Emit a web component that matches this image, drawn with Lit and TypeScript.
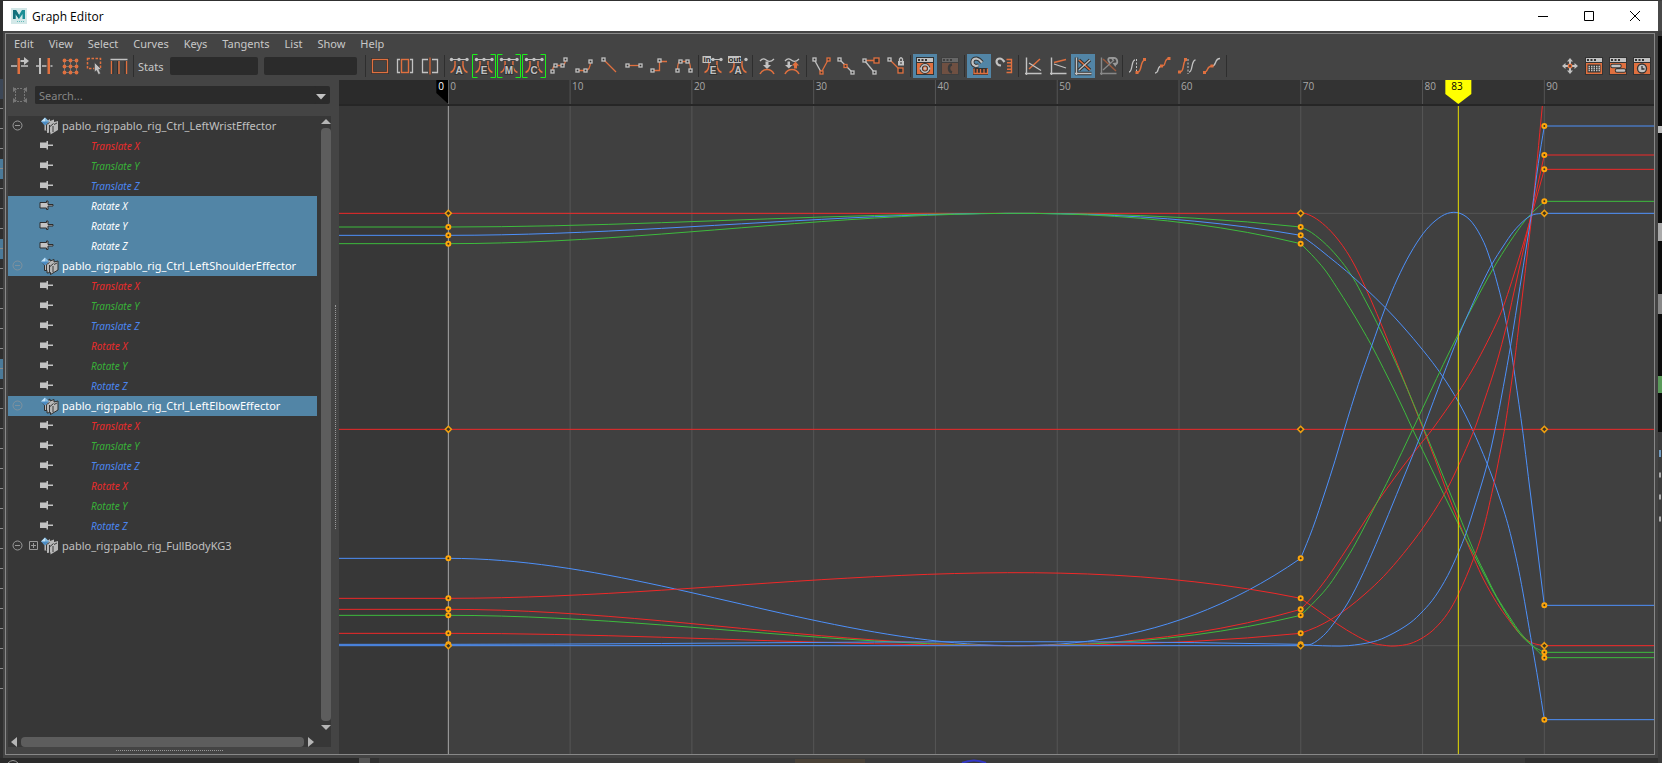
import { LitElement, html, svg, css, TemplateResult } from "lit";
import { customElement, state } from "lit/decorators.js";
import { classMap } from "lit/directives/class-map.js";

const OR = "#e0703f";
const GR = "#c2c2c2";
const RED = "#f02828";
const GREEN = "#3dbb3d";
const BLUE = "#4d90fa";

/* ---------- toolbar glyphs, 24 x 24 ---------- */

const knot = (x: number, y: number, c = GR, s = 2) =>
  svg`<rect x=${x - s + 0.5} y=${y - s + 0.5} width=${s * 2 - 1} height=${s * 2 - 1} fill="#333" stroke=${c} stroke-width="1.3"/>`;
const ln = (d: string, c = OR, w = 1.3) =>
  svg`<path d=${d} fill="none" stroke=${c} stroke-width=${w}/>`;
const fill = (d: string, c = GR) => svg`<path d=${d} fill=${c}/>`;

const bell = (letter: string, mode = "") => svg`
  ${ln("M8 7C8.5 13 8 17 3.5 18.5M16 7C15.5 13 16 17 20.5 18.5", OR, 1.5)}
  ${mode !== "out" ? ln("M4 5.5H20", GR, 1) : ""}
  <circle cx="12" cy="5.5" r="1.7" fill=${GR}/><circle cx="20" cy="5.5" r="1.7" fill=${GR}/>
  ${mode === "in" || mode === "out" ? "" : svg`<circle cx="4.5" cy="5.5" r="1.7" fill=${GR}/>`}
  <text x="12" y="20" class="g" text-anchor="middle">${letter}</text>
  ${mode === "in" ? svg`<rect x="1.5" y="2" width="8.5" height="7" fill=${GR}/><text class="tag" x="2.5" y="8">in</text>` : ""}
  ${mode === "out" ? svg`<rect x="2" y="2" width="13" height="7" fill=${GR}/><text class="tag" x="2.5" y="8">out</text>` : ""}
  ${mode === "box" ? ln("M5.5 .5H.5V23.5H5.5M18.5 .5H23.5V23.5H18.5", "#1bf01b", 1) : ""}`;

const panel = (inner: unknown) => svg`
  <rect x="3" y="3" width="18" height="18" fill="#333"/>
  <rect x="4" y="4" width="16" height="4" fill=${GR}/><rect x="4" y="9" width="16" height="11" fill=${OR}/>
  <path d="M5 5H7V7H5zM8.5 5H10.5V7H8.5zM12 5H14V7H12z" fill="#333"/>${inner}`;

const axes = (a: string, b: string, ac = OR, c = GR) => svg`
  ${ln("M5.5 3.5V21M4 19.5H20.5", c, 1.4)}${ln(a, ac, 1.5)}${ln(b, c, 1.3)}`;

const G: Record<string, TemplateResult> = {
  move: svg`${fill("M10.5 4H13V20H10.5z", OR)}${ln("M4 12H10M14 12H21", GR)}${fill("M13.5 6H17V3L22 7L17 11V8H13.5z")}`,
  insert: svg`${fill("M7 4H9V20H7z")}${fill("M15.5 4H18V20H15.5z", OR)}${ln("M4 12H7M10 12H14.5M18.5 12H20.5", GR)}`,
  lattice: svg`<path d="M7.5 6.5H19.5V18.5H7.5zM7.5 12.5H19.5M13.5 6.5V18.5" fill="none" stroke="#aaa" stroke-dasharray="1 1"/>
    ${[7.5, 13.5, 19.5].map((x) => [6.5, 12.5, 18.5].map((y) => svg`<circle cx=${x} cy=${y} r="1.9" fill=${OR}/>`))}`,
  region: svg`<path d="M5.5 4.5H18.5V14.5H5.5z" fill="none" stroke=${OR} stroke-width="1.5" stroke-dasharray="2.5 1.5"/>
    <path d="M12.5 8.5V18L14.5 16.5L16.5 20.5L18.5 19.5L16.8 15.5H19.5z" fill=${GR} stroke="#444" stroke-width=".6"/>`,
  retime: svg`${ln("M3.5 5.5H20.5", GR, 1.5)}${ln("M4.5 7V20M12 7V20M19.5 7V20", OR, 1.4)}${ln("M6 7V20M10.5 7V20M18 7V20", "#2e2e2e", 1)}`,
  frameAll: svg`<rect x="4.5" y="5.5" width="15" height="13" fill="none" stroke="#333" stroke-width="3"/><rect x="4.5" y="5.5" width="15" height="13" fill="none" stroke=${OR} stroke-width="1.3"/>`,
  framePlay: svg`${ln("M7 5.5H4.5V18.5H7M17 5.5H19.5V18.5H17", GR)}<rect x="8.5" y="5.5" width="7" height="13" fill="none" stroke=${OR} stroke-width="1.4"/>`,
  center: svg`${ln("M10 5.5H4.5V18.5H10M14 5.5H19.5V18.5H14", GR)}${fill("M11 3.5H13V20.5H11z", "#a0583a")}`,
  A: bell("A"), E: bell("E", "box"), M: bell("M", "box"), C: bell("C", "box"),
  spline: svg`${ln("M5.5 17C6 12 7 11.5 8.5 11.5H15.5C17.5 11.5 18 10 18.5 6")}${knot(5.5, 17.5)}${knot(8.5, 11.5)}${knot(15.5, 11.5)}${knot(18.5, 5.5)}`,
  clamped: svg`${ln("M5.5 16.5H13C17 16.5 18.5 13 18.5 7")}${knot(5.5, 16.5)}${knot(13.5, 16.5)}${knot(18.5, 7.5)}`,
  linear: svg`${ln("M6.5 5.5L19 18")}${knot(6.5, 5.5)}`,
  flat: svg`${ln("M5.5 11.5H18.5")}${knot(5.5, 11.5)}${knot(18.5, 11.5)}`,
  step: svg`${ln("M5.5 16.5H12.5V7.5H20")}${knot(5.5, 16.5)}${knot(12.5, 6.5)}`,
  plateau: svg`${ln("M5.5 16.5C5.5 10 6.5 7.5 8.5 7.5H15.5C17.5 7.5 18.5 10 18.5 16.5")}${knot(8.5, 7.5)}${knot(15.5, 7.5)}${knot(5.5, 16.5)}${knot(18.5, 16.5)}`,
  inE: bell("E", "in"), outA: bell("A", "out"),
  buffer: svg`${ln("M5 7C8 3.5 10 5 12 6.5S16 8 19 5", GR)}${fill("M10.5 7.5H13.5V11H16L12 15L8 11H10.5z")}${ln("M5 20C8 14 16 14 19 20", OR, 1.6)}`,
  swap: svg`${ln("M5 7C8 3.5 10 5 12 6.5S16 8 19 5", GR)}${fill("M7.5 7.5H10V11H12.5L8.8 14.5L5 11H7.5z")}${fill("M14 14.5V11.5H11.8L15.5 7.5L19 11.5H17V14.5z", OR)}${ln("M5 20C8 14 16 14 19 20", OR, 1.6)}`,
  breakT: svg`${ln("M5.5 6L12 18", GR)}${ln("M12.5 18L19 6")}${knot(5.5, 5.5)}${knot(19.5, 5.5, OR)}${knot(12.5, 18.5, OR)}`,
  unify: svg`${ln("M5.5 5.5L18.5 18.5", GR)}${knot(5.5, 5.5)}${knot(11.5, 12, OR)}${knot(18.5, 18.5)}`,
  freeLen: svg`${ln("M5.5 6.5H15", OR, 1.6)}${ln("M5.5 6.5L15 18", GR)}${knot(5.5, 6.5)}${knot(17.5, 6.5, OR, 3)}${knot(15.5, 18.5)}`,
  lockLen: svg`${ln("M5.5 5.5L15 15")}${knot(5.5, 5.5)}${knot(16.5, 16.5, OR, 3)}${fill("M14 7H20V11.5H14z")}${ln("M15.5 7V5Q17 2.5 18.5 5V7", GR)}<rect x="16.5" y="8" width="1" height="2" fill="#333"/>`,
  autoLoad: panel(svg`<circle cx="12" cy="14.5" r="3.8" fill="none" stroke="#333" stroke-width="3.2"/><circle cx="12" cy="14.5" r="3.8" fill="none" stroke=${GR} stroke-width="1.5"/><circle cx="12" cy="14.5" r="1.3" fill=${GR}/>${ln("M6.5 14.5H8M16 14.5H17.5", GR, 2)}`),
  manual: svg`<g opacity=".28">${panel(ln("M14 10.5C10 11 10 17.5 14 18.5", "#222", 2.5))}</g>`,
  snapT: svg`${ln("M11.5 11.5L8.5 12C4 10.5 4.5 4.5 9.5 4.5Q12.5 5 15 8.5", "#333", 4)}${ln("M11.5 11.5L8.5 12C4 10.5 4.5 4.5 9.5 4.5Q12.5 5 15 8.5", GR, 2.2)}<rect x="6" y="14" width="15" height="7" fill="#333"/>${ln("M7 14.5V19.5H20.5V14.5M10.2 15V19M13.5 15V19M17 15V19", OR, 1.3)}`,
  snapV: svg`${ln("M9 11.5C3.5 11 3 4.5 8 4.5Q10 4.5 12.5 8", GR, 2.2)}${ln("M14.5 5.5H19.5V18.5H14.5M15 8.7H19M15 12H19M15 15.2H19", OR, 1.4)}`,
  abs: axes("M8 15L19 5", "M8 9L20 16.5"),
  stack: axes("M8 8.5L20 5.5", "M8 10L20 14"),
  norm: svg`${ln("M5.5 3.5V21M4 19.5H20.5M8 6L19 16M8 16L19 6", "#333", 3.5)}${axes("M8 6L19 16", "M8 16L19 6")}`,
  renorm: svg`${axes("M7 5L20 17", "M7 16L18 6", "#9a5a3e", "#888")}${ln("M14 9C10.5 5 13 2.5 16 4.500M17 4C22 3.500 22.500 9.500 19 11", "#999", 1.8)}${fill("M14 3H18.5L17 7zM16.500 9L20.500 8.500L19.500 13z", "#999")}`,
  preCycle: svg`${ln("M4 18C8 18 6 6 10 6", GR)}<path d="M11.500 5V20" stroke=${GR} stroke-dasharray="2 1.5"/>${ln("M13 18C17 18 15 6 20 6", OR, 1.5)}${fill("M10.5 17H13.5V20H10.5zM18 4H21V7H18z", OR)}`,
  preOff: svg`${ln("M5 19C10 19 6 12 12 12", GR)}${ln("M12 12C17 12 13 5 19 4.5")}${fill("M10 10.5H13V13.5H10zM17.5 3H20.5V6H17.5z", OR)}`,
  postCycle: svg`${ln("M5 18C10 18 7 6 11.5 6", OR, 1.5)}<path d="M13 5V20" stroke=${GR} stroke-dasharray="2 1.5"/>${ln("M14 18C18 18 16 6 20.5 6", GR)}${fill("M3 16.5H6V19.5H3zM9 4H12V7H9z", OR)}`,
  postOff: svg`${ln("M4 18.5C9 18 6 12 12 12", OR, 1.4)}${ln("M12 12C17 12 14 4.5 20 4.5", GR)}${fill("M3 17H6V20H3zM10.5 10.5H13.5V13.5H10.5z", OR)}`,
  pan: svg`${fill("M12 4L15 7.5H13V10H11V7.5H9zM12 20L15 16.5H13V14H11V16.5H9zM4 12L7.5 9V11H10V13H7.5V15zM20 12L16.5 9V11H14V13H16.5V15z")}<rect x="10.5" y="10.5" width="3" height="3" fill="#333" stroke=${OR} stroke-width="1.3"/>`,
  dope: panel(svg`<rect x="5.5" y="10.5" width="13" height="8" fill="#333"/><path d="M6.5 12.5H18M6.5 16.5H18M6.5 14.5H18" stroke=${GR} stroke-width="1.3" stroke-dasharray="1.5 1"/>`),
  trax: panel(svg`<path d="M6.5 12H13.5M11 16.5H18" stroke="#333" stroke-width="4.5" stroke-linecap="round"/><path d="M6.5 12H13.5M11 16.5H18" stroke=${GR} stroke-width="2.5" stroke-linecap="round"/>`),
  time: panel(svg`<circle cx="12" cy="14.5" r="4.5" fill=${GR} stroke="#333" stroke-width="1.3"/>${ln("M12 12V15H14.5", "#333")}`),
};

/* ---------- curves ---------- */

type P = [number, number];
interface Curve { c: string; k: number; apex: number; pts: P[] }

const X0 = -2495, X70 = 62, X90 = 793, LEFT = -2823, TOP = 78, W = 3945, H = 1944;
const frameX = (f: number) => X0 + ((X90 - X0) * f) / 90;
const px = (x: number) => `${((x - LEFT) / W) * 100}%`;
const py = (y: number) => `${((y - TOP) / H) * 100}%`;

const CURVES: Curve[] = [
  { c: RED, k: 400, apex: 400, pts: [[78, 401], [110, 417], [145, 446], [175, 480], [200, 515], [225, 558], [255, 620], [290, 700], [330, 797], [370, 896], [400, 972], [430, 1048], [465, 1138], [500, 1234], [533, 1317], [552, 1365], [583, 1438], [610, 1497], [650, 1568], [685, 1618], [720, 1662], [755, 1688], [793, 1697]] },
  { c: GREEN, k: 441, apex: 400, pts: [[95, 458], [140, 495], [185, 545], [220, 595], [250, 650], [290, 727], [330, 810], [365, 888], [400, 970], [432, 1048], [465, 1128], [495, 1202], [535, 1300], [558, 1357], [585, 1420], [620, 1491], [650, 1550], [690, 1613], [720, 1657], [757, 1697], [793, 1733]] },
  { c: BLUE, k: 466, apex: 400, pts: [[100, 493], [145, 529], [200, 574], [255, 624], [316, 683], [370, 741], [430, 812], [485, 885], [535, 965], [577, 1048], [621, 1150], [655, 1242], [687, 1345], [720, 1490], [757, 1700], [775, 1805], [793, 1919]] },
  { c: GREEN, k: 491, apex: 400, pts: [[95, 524], [135, 570], [170, 622], [210, 685], [245, 744], [275, 797], [310, 865], [345, 935], [375, 998], [398, 1048], [430, 1115], [490, 1240], [533, 1328], [552, 1366], [585, 1430], [650, 1553], [715, 1656], [757, 1697], [793, 1717]] },
  { c: RED, k: 1048, apex: 1048, pts: [[793, 1048]] },
  { c: BLUE, k: 1435, apex: 1697, pts: [[98, 1345], [135, 1236], [165, 1142], [193, 1048], [235, 913], [275, 798], [316, 683], [352, 597], [390, 522], [430, 460], [465, 423], [503, 400], [540, 400], [576, 427], [612, 488], [636, 555], [650, 603], [668, 675], [693, 810], [705, 890], [729, 1060], [745, 1190], [765, 1350], [793, 1576]] },
  { c: RED, k: 1555, apex: 1478, pts: [[95, 1578], [140, 1610], [200, 1650], [270, 1687], [320, 1697], [345, 1698], [390, 1691], [430, 1672], [465, 1645], [503, 1600], [535, 1543], [583, 1430], [612, 1340], [643, 1205], [665, 1095], [675, 1040], [690, 940], [704, 840], [715, 750], [735, 580], [757, 390], [787, 78], [793, 20]] },
  { c: RED, k: 1588, apex: 1697, pts: [[95, 1553], [140, 1496], [185, 1430], [245, 1338], [270, 1299], [320, 1226], [370, 1158], [420, 1094], [457, 1048], [535, 937], [575, 873], [612, 805], [650, 728], [670, 680], [695, 605], [725, 508], [757, 398], [793, 268]] },
  { c: GREEN, k: 1606, apex: 1697, pts: [[95, 1574], [140, 1525], [175, 1475], [220, 1402], [270, 1308], [320, 1210], [365, 1118], [398, 1048], [450, 938], [490, 853], [535, 762], [580, 675], [640, 565], [690, 485], [735, 422], [757, 398], [793, 364]] },
  { c: RED, k: 1660, apex: 1697, pts: [[110, 1641], [155, 1617], [205, 1583], [255, 1542], [310, 1490], [370, 1421], [430, 1342], [490, 1248], [535, 1158], [583, 1048], [612, 965], [650, 848], [680, 735], [700, 645], [725, 533], [757, 388], [793, 225]] },
  { c: BLUE, k: 1693, apex: 1685, pts: [[100, 1696], [155, 1698], [205, 1697], [280, 1685], [330, 1665], [390, 1629], [430, 1592], [465, 1550], [503, 1487], [535, 1418], [558, 1360], [577, 1302], [621, 1155], [647, 1040], [670, 920], [693, 790], [720, 620], [740, 495], [757, 385], [775, 250], [793, 138]] },
  { c: BLUE, k: 1697, apex: 1697, pts: [[95, 1692], [130, 1667], [160, 1632], [205, 1566], [250, 1478], [300, 1364], [350, 1243], [400, 1121], [430, 1045], [460, 965], [487, 893], [535, 770], [580, 667], [605, 613], [636, 552], [670, 498], [700, 455], [735, 419], [760, 404], [793, 400]] },
];

/* Before frame 70 each curve is one cubic span with a flat start; after it, a Hermite spline through samples. */
const path = ({ k, apex, pts }: Curve) => {
  const third = (X70 - X0) / 3;
  let d = `M${LEFT} ${k}H${X0}C${X0 + third} ${k} ${X0 + 2 * third} ${k + (apex - k) * 2.25} ${X70} ${k}`;
  const a: P[] = [[X70, k], ...pts];
  const slope = (i: number) => {
    const p = a[Math.max(i - 1, 0)], q = a[Math.min(i + 1, a.length - 1)];
    return (q[1] - p[1]) / (q[0] - p[0]);
  };
  for (let i = 0; i < a.length - 1; i++) {
    const [x1, y1] = a[i], [x2, y2] = a[i + 1];
    const h = (x2 - x1) / 3;
    d += `C${x1 + h} ${y1 + h * slope(i)} ${x2 - h} ${y2 - h * slope(i + 1)} ${x2} ${y2}`;
  }
  return d + `H${LEFT + W}`;
};

@customElement("graph-view")
class GraphView extends LitElement {
  static styles = css`
    :host { display: flex; flex-direction: column; flex: 1; min-width: 0; min-height: 0; }
    svg { display: block; width: 100%; }
    .ruler { flex: none; height: 24px; background: #333; border-bottom: 2px solid #262626; }
    .plot { flex: 1; min-height: 0; background: #404040; }
    .fill { height: 100%; }
    .spot { overflow: visible; width: 1px; height: 1px; }
    path { fill: none; stroke-width: 1px; vector-effect: non-scaling-stroke; }
    text { font: 10px "Open Sans", "Noto Sans", sans-serif; fill: #a8a8a8; }
    .now { fill: #000; }
    .start { fill: #fff; }
    .key { fill: #3a3320; stroke: #ffa60a; stroke-width: 2px; }
    .dia { fill: #3a3320; stroke: #f0a010; stroke-width: 1.5px; }
  `;

  private key(x: number, y: number) {
    const flat = y === 400 || y === 1048 || y === 1697;
    return svg`<svg class="spot" x=${px(x)} y=${py(y)}>${flat
      ? svg`<polygon class="dia" points="0,-3 3,0 0,3 -3,0"/>`
      : svg`<circle class="key" r="2"/>`}</svg>`;
  }

  render() {
    const frames = [0, 10, 20, 30, 40, 50, 60, 70, 80, 90];
    const now = 535;
    return html`
      <svg class="ruler" role="img" aria-label="Time ruler">
        <rect width=${px(X0)} height="24" fill="#2b2b2b"/>
        ${frames.map((f) => svg`
          <line x1=${px(frameX(f))} x2=${px(frameX(f))} y1="0" y2="100%" stroke=${f ? "#555" : "#9a9a9a"}/>
          <text x=${px(frameX(f))} dx="2" y="10">${f}</text>`)}
        <svg class="spot" x=${px(X0)}><polygon points="-12,0 0,0 0,24 -12,13" fill="#000"/></svg>
        <text class="start" x=${px(X0)} dx="-10" y="10">0</text>
        <svg class="spot" x=${px(now)}><polygon points="-13,0 13,0 13,14 0,24 -13,14" fill="#ff0"/></svg>
        <text class="now" x=${px(now)} dx="-7" y="10">83</text>
      </svg>
      <svg class="plot" role="img" aria-label="Animation curves">
        <rect width=${px(X0)} height="100%" fill="#373737"/>
        ${frames.map((f) => svg`<line x1=${px(frameX(f))} x2=${px(frameX(f))} y1="0" y2="100%" stroke=${f ? "#555" : "#a8a8a8"}/>`)}
        ${[400, 1697].map((y) => svg`<line x1=${px(X0)} x2="100%" y1=${py(y)} y2=${py(y)} stroke="#555"/>`)}
        <svg class="fill" viewBox="${LEFT} ${TOP} ${W} ${H}" preserveAspectRatio="none">
          ${CURVES.map((c) => svg`<path d=${path(c)} stroke=${c.c}/>`)}
        </svg>
        ${CURVES.map((c) => svg`
          ${this.key(X0, c.k)}${this.key(X70, c.k)}
          ${c.pts[c.pts.length - 1][1] > TOP ? this.key(X90, c.pts[c.pts.length - 1][1]) : ""}`)}
        <line x1=${px(now)} x2=${px(now)} y1="0" y2="100%" stroke="#e6dc00" stroke-width="1"/>
      </svg>`;
  }
}

/* ---------- channel tree ---------- */

interface Node { name: string; on: boolean; channels: { t: string; a: string }[]; picked?: string; closed?: boolean }

const AXES = ["X", "Y", "Z"];
const CHANNELS = ["Translate", "Rotate"].flatMap((t) => AXES.map((a) => ({ t: `${t} ${a}`, a })));
const NODES: Node[] = [
  { name: "pablo_rig:pablo_rig_Ctrl_LeftWristEffector", on: false, channels: CHANNELS, picked: "Rotate" },
  { name: "pablo_rig:pablo_rig_Ctrl_LeftShoulderEffector", on: true, channels: CHANNELS },
  { name: "pablo_rig:pablo_rig_Ctrl_LeftElbowEffector", on: true, channels: CHANNELS },
  { name: "pablo_rig:pablo_rig_FullBodyKG3", on: false, channels: [], closed: true },
];

@customElement("channel-tree")
class ChannelTree extends LitElement {
  static styles = css`
    :host { display: grid; grid-template: 1fr 17px / 1fr 14px; flex: 1; min-height: 0; background: #373737; }
    ul { list-style: none; margin: 0; padding: 0; }
    .rows { overflow: hidden; font: 11px/20px "Noto Sans", "Open Sans", sans-serif; color: #c0c0c0; }
    .row { display: flex; align-items: center; height: 20px; white-space: nowrap; }
    .on { background: #5285a6; color: #fff; }
    .row svg { flex: none; }
    .name { padding-left: 3px; }
    .chan { font-size: 10px; font-style: italic; padding-left: 37px; }
    .X { color: #e82c2c; } .Y { color: #38b038; } .Z { color: #4b86ef; }
    .on .chan { color: #fff; }
    .v, .h { display: flex; align-items: center; }
    .v { flex-direction: column; padding: 2px 0 0 4px; }
    .h { padding: 7px 3px 0 3px; }
    .thumb { flex: 1; background: #5d5d5d; border-radius: 4px; }
    .v .thumb { width: 10px; margin: 4px 0; }
    .h .thumb { height: 10px; margin: 0 4px; }
  `;

  render() {
    const rim = (on: boolean) => (on ? "#2e2e2e" : "none");
    return html`
      <ul class="rows">
        ${NODES.map((n) => html`<li>
          <div class=${classMap({ row: true, on: n.on })}>
            <svg width="51" height="20">
              <circle cx="9.5" cy="9.5" r="4.5" fill="none" stroke="#999" opacity=${n.on ? 0.6 : 1}/>
              <path d="M7 9.5H12" stroke="#999" opacity=${n.on ? 0.6 : 1}/>
              ${n.closed ? svg`<path d="M21.5 5.5H29.5V13.5H21.5zM23 9.5H28M25.5 7V12" fill="none" stroke="#999"/>` : ""}
              <path d="M35 7.5L39 6V5L42 3V5L46 3.500V6L50 5V14L42.500 18.500V16.500L39 17V14.500H36.500V9z" fill="#b8b8b8" stroke=${rim(n.on)}/>
              <path d="M38.500 8.500V14.500M41.500 9L41.500 17M38.500 8.500L41.500 6.500M42 10.500L45.500 7.500M45 10V16M46 8.500L49 7" fill="none" stroke="#3a3a3a"/>
              <path d="M37 1.5L41 5.5L37 9.5L33 5.5z" fill="#4a8cc4"/><path d="M37 1.5L37 5.5L33 5.5z" fill="#c4e2f5"/><path d="M37 1.5L41 5.5H37z" fill="#8fc0e2"/>
            </svg>
            <span class="name">${n.name}</span>
          </div>
          <ul>
            ${n.channels.map((c) => {
              const on = !!n.picked && c.t.startsWith(n.picked);
              return html`<li class=${classMap({ row: true, on })}>
                <svg width="46" height="20"><path d="M32 6.500H38.5V5H40V8.500H45V10H40V13.500H38.5V12H32z" fill="#c4c4c4" stroke=${rim(on)}/></svg>
                <span class="chan ${c.a}">${c.t}</span>
              </li>`;
            })}
          </ul>
        </li>`)}
      </ul>
      <div class="v">
        <svg width="10" height="6"><path d="M0 6L5 1L10 6z" fill="#b5b5b5"/></svg>
        <div class="thumb"></div>
        <svg width="10" height="5"><path d="M0 0L5 5L10 0z" fill="#b5b5b5"/></svg>
      </div>
      <div class="h">
        <svg width="6" height="10"><path d="M6 0L0 5L6 10z" fill="#b5b5b5"/></svg>
        <div class="thumb"></div>
        <svg width="6" height="10"><path d="M0 0L6 5L0 10z" fill="#b5b5b5"/></svg>
      </div>`;
  }
}

/* ---------- application ---------- */

const MENUS = ["Edit", "View", "Select", "Curves", "Keys", "Tangents", "List", "Show", "Help"];
const EDIT = [["move", "Move nearest picked key"], ["insert", "Insert keys"], ["lattice", "Lattice deform keys"], ["region", "Region tool"], ["retime", "Retime tool"]];
const GROUPS = [
  [["frameAll", "Frame all"], ["framePlay", "Frame playback range"], ["center", "Center view on current time"]],
  [["A", "Auto tangents"], ["E", "Auto ease"], ["M", "Auto mix"], ["C", "Auto custom"], ["spline", "Spline tangents"], ["clamped", "Clamped tangents"], ["linear", "Linear tangents"], ["flat", "Flat tangents"], ["step", "Step tangents"], ["plateau", "Plateau tangents"]],
  [["inE", "In tangent"], ["outA", "Out tangent"]],
  [["buffer", "Buffer curve snapshot"], ["swap", "Swap buffer curves"]],
  [["breakT", "Break tangents"], ["unify", "Unify tangents"], ["freeLen", "Free tangent length"], ["lockLen", "Lock tangent length"]],
  [["autoLoad", "Auto load"], ["manual", "Load selected"]],
  [["snapT", "Time snap"], ["snapV", "Value snap"]],
  [["abs", "Absolute view"], ["stack", "Stacked view"], ["norm", "Normalized view"], ["renorm", "Renormalize"]],
  [["preCycle", "Pre-infinity cycle"], ["preOff", "Pre-infinity cycle with offset"], ["postCycle", "Post-infinity cycle"], ["postOff", "Post-infinity cycle with offset"]],
];
const RIGHT = [["pan", "Unlock view"], ["dope", "Dope sheet"], ["trax", "Trax editor"], ["time", "Time editor"]];

@customElement("app-root")
class AppRoot extends LitElement {
  @state() private active = new Set(["autoLoad", "snapT", "norm"]);

  static styles = css`
    :host { display: block; height: 100vh; background: #303030; position: relative; overflow: hidden; font: 11px "Noto Sans", "Open Sans", sans-serif; color: #c8c8c8; }
    * { box-sizing: border-box; }
    button { border: 0; background: none; padding: 0; margin: 0; font: inherit; color: inherit; }
    .desk { position: absolute; inset: 0; width: 100%; height: 100%; }
    .shell { position: relative; height: 100%; padding: 1px 4px 5px 3px; }
    .win { height: 100%; display: flex; flex-direction: column; background: #444; }
    .title { flex: none; height: 30px; background: #fff; color: #000; display: flex; align-items: center; padding-left: 8px; }
    h1 { font: 12px "Open Sans", "Noto Sans", sans-serif; flex: 1; margin: 0 0 0 5px; }
    .title button { width: 46px; height: 30px; display: grid; place-items: center; }
    .panel { flex: 1; min-height: 0; margin: 2px 3px 3px 2px; border: 1px solid #888; display: flex; flex-direction: column; }
    .menu { flex: none; display: flex; gap: 15px; height: 20px; line-height: 18px; padding-left: 8px; }
    .bar { flex: none; display: flex; align-items: center; height: 26px; padding: 0 0 2px 1px; }
    .set { display: flex; gap: 1px; }
    .tool { width: 24px; height: 24px; }
    .tool svg { display: block; }
    .lit { background: #5285a6; }
    .sep { width: 1px; height: 22px; margin: 0 2px; background: #2e2e2e; }
    .g { font: bold 10px "Liberation Sans", sans-serif; fill: #c2c2c2; stroke: #333; stroke-width: 2px; paint-order: stroke; }
    .tag { font: bold 8px "Liberation Sans", sans-serif; fill: #222; }
    .stats { display: flex; align-items: center; gap: 6px; padding: 0 6px 0 2px; }
    .stats label { width: 26px; }
    input { border: 0; outline: 0; background: #2b2b2b; border-radius: 2px; color: #ccc; font: inherit; height: 18px; min-width: 0; padding: 0 4px; }
    .a { width: 88px; } .b { width: 93px; }
    .right { margin-left: auto; display: flex; }
    .body { flex: 1; min-height: 0; display: flex; }
    .side { flex: none; width: 325px; padding: 6px 0 0 2px; display: flex; flex-direction: column; }
    .find { display: flex; align-items: center; height: 18px; margin-bottom: 12px; padding: 0 1px 0 5px; gap: 8px; flex: none; }
    .box { flex: 1; display: flex; align-items: center; background: #2b2b2b; border-radius: 2px; padding-right: 4px; }
    .box input { flex: 1; }
    .box input::placeholder { color: #858585; opacity: 1; }
    .grip { flex: none; height: 7px; display: grid; place-items: center; }
    .grip i { width: 107px; border-top: 1px dotted #999; }
    .split { flex: none; width: 8px; display: grid; place-items: center; }
    .split i { height: 224px; border-left: 1px dotted #999; }
  `;

  private toggle(id: string) {
    const next = new Set(this.active);
    next.has(id) ? next.delete(id) : next.add(id);
    this.active = next;
  }

  private tools(list: string[][]) {
    return list.map(([id, label]) => html`<button class=${classMap({ tool: true, lit: this.active.has(id) })} title=${label} aria-label=${label} @click=${() => this.toggle(id)}>
      <svg width="24" height="24" viewBox="0 0 24 24">${G[id]}</svg></button>`);
  }

  private desk() {
    const ticks = Array.from({ length: 30 }, (_, i) => 108 + i * 20);
    return html`<svg class="desk" aria-hidden="true">
      <rect width="5" height="100%" fill="#2f2f2f"/>
      ${[79, 159, 239, 359].map((y, i) => svg`<rect y=${y} width="3" height="20" fill=${i ? "#4b7a99" : "#3c4757"}/>`)}
      ${ticks.map((y) => svg`<rect y=${y} width="3" height="1" fill="#8a8a8a"/>`)}
      <svg x="100%" width="1" height="1" overflow="visible">
        <rect x="-4" width="4" height="763" fill="#3c3c3c"/><rect x="-4" y="36" width="4" height="396" fill="#0c0c0c"/>
        <rect x="-4" y="126" width="4" height="7" fill="#bbb"/><rect x="-4" y="223" width="4" height="18" fill="#aaa"/>
        <rect x="-4" y="294" width="4" height="20" fill="#888"/><rect x="-4" y="376" width="4" height="17" fill="#5a9a5a"/>
        <rect x="-4" y="1" width="4" height="30" fill="#484848"/><rect x="-3" y="450" width="2" height="7" fill="#6f9ac0"/>
        <path d="M-3 475H-1M-3 497H-1M-3 519H-1" stroke="#aaa" stroke-width="5"/>
      </svg>
      <svg y="100%" width="1" height="1" overflow="visible">
        <rect y="-5" width="359" height="5" fill="#2a2a2a"/><rect x="359" y="-5" width="11" height="5" fill="#555"/>
        <rect x="379" y="-5" width="1146" height="5" fill="#3a3a3a"/>
        <path d="M8 0Q13 -5 18 0" fill="none" stroke="#999"/><path d="M962 0Q974 -5 986 0" fill="none" stroke="#3538c8" stroke-width="2"/>
        <rect x="795" y="-4" width="70" height="4" fill="#4a4238"/>
      </svg>
    </svg>`;
  }

  render() {
    return html`${this.desk()}
      <div class="shell"><main class="win">
        <header class="title">
          <svg width="16" height="16"><rect width="16" height="16" fill="#d3e8e8"/><path d="M2 2H5L8 7L11 2H14V11H11.5V6L8 11L4.5 6V11H2z" fill="#1b8f96"/><path d="M2 2H5L8 7V11L4.5 6V11H2z" fill="#126f7b"/><path d="M6 13.5H13" stroke="#6bb" stroke-dasharray="1 1"/></svg>
          <h1>Graph Editor</h1>
          <button aria-label="Minimize"><svg width="10" height="10"><path d="M0 5.5H10" stroke="#000"/></svg></button>
          <button aria-label="Maximize"><svg width="10" height="10"><path d="M.5 .5H9.5V9.5H.5z" fill="none" stroke="#000"/></svg></button>
          <button aria-label="Close"><svg width="10" height="10"><path d="M0 0L10 10M10 0L0 10" stroke="#000"/></svg></button>
        </header>
        <div class="panel">
          <nav class="menu">${MENUS.map((m) => html`<button>${m}</button>`)}</nav>
          <div class="bar">
            <div class="set">${this.tools(EDIT)}</div><span class="sep"></span>
            <div class="stats"><label for="st">Stats</label><input id="st" class="a"><input class="b" aria-label="Stats value"></div>
            ${GROUPS.map((g) => html`<span class="sep"></span><div class="set">${this.tools(g)}</div>`)}
            <span class="sep"></span>
            <div class="right">${this.tools(RIGHT)}</div>
          </div>
          <div class="body">
            <aside class="side">
              <div class="find">
                <svg width="14" height="16"><path d="M2.5 1V15M11.5 1V15M4 1.5H10M4 14.5H10" fill="none" stroke="#777" stroke-dasharray="2 1"/><path d="M0 0L4 2.5L0 5zM14 0L10 2.5L14 5zM0 11L4 13.5L0 16zM14 11L10 13.5L14 16z" fill="#777"/></svg>
                <div class="box"><input type="search" placeholder="Search..." aria-label="Search">
                <button aria-label="Search options"><svg width="10" height="6"><path d="M0 0H10L5 5.5z" fill="#c2c2c2"/></svg></button></div>
              </div>
              <channel-tree></channel-tree>
              <div class="grip"><i></i></div>
            </aside>
            <div class="split"><i></i></div>
            <graph-view></graph-view>
          </div>
        </div>
      </main></div>`;
  }
}
